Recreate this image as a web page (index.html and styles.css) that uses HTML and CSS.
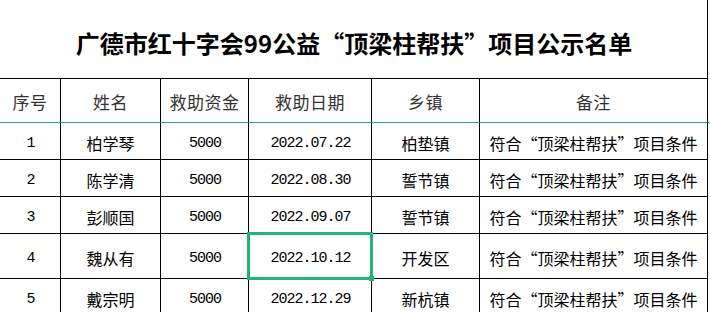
FILE: index.html
```html
<!DOCTYPE html>
<html lang="zh-CN">
<head>
<meta charset="utf-8">
<title>广德市红十字会99公益“顶梁柱帮扶”项目公示名单</title>
<link rel="stylesheet" href="styles.css">
</head>
<body>
<div class="sheet">
  <div class="title">广德市红十字会99公益“顶梁柱帮扶”项目公示名单</div>
  <div class="pad pad-title"></div>

  <div class="hd">序号</div>
  <div class="hd">姓名</div>
  <div class="hd">救助资金</div>
  <div class="hd">救助日期</div>
  <div class="hd">乡镇</div>
  <div class="hd">备注</div>
  <div class="pad pad-hd"></div>

  <div class="cell"><span class="num">1</span></div>
  <div class="cell">柏学琴</div>
  <div class="cell"><span class="num">5000</span></div>
  <div class="cell"><span class="num">2022.07.22</span></div>
  <div class="cell">柏垫镇</div>
  <div class="cell">符合“顶梁柱帮扶”项目条件</div>
  <div class="pad"></div>

  <div class="cell"><span class="num">2</span></div>
  <div class="cell">陈学清</div>
  <div class="cell"><span class="num">5000</span></div>
  <div class="cell"><span class="num">2022.08.30</span></div>
  <div class="cell">誓节镇</div>
  <div class="cell">符合“顶梁柱帮扶”项目条件</div>
  <div class="pad"></div>

  <div class="cell"><span class="num">3</span></div>
  <div class="cell">彭顺国</div>
  <div class="cell"><span class="num">5000</span></div>
  <div class="cell"><span class="num">2022.09.07</span></div>
  <div class="cell">誓节镇</div>
  <div class="cell">符合“顶梁柱帮扶”项目条件</div>
  <div class="pad"></div>

  <div class="cell"><span class="num">4</span></div>
  <div class="cell">魏从有</div>
  <div class="cell"><span class="num">5000</span></div>
  <div class="cell selected"><span class="num">2022.10.12</span></div>
  <div class="cell">开发区</div>
  <div class="cell">符合“顶梁柱帮扶”项目条件</div>
  <div class="pad"></div>

  <div class="cell"><span class="num">5</span></div>
  <div class="cell">戴宗明</div>
  <div class="cell"><span class="num">5000</span></div>
  <div class="cell"><span class="num">2022.12.29</span></div>
  <div class="cell">新杭镇</div>
  <div class="cell">符合“顶梁柱帮扶”项目条件</div>
  <div class="pad"></div>
</div>
</body>
</html>
```

FILE: styles.css
```css
html, body {
  margin: 0;
  padding: 0;
  background: #ffffff;
  overflow: hidden;
}

body {
  font-family: "Noto Sans CJK SC", "Noto Sans", sans-serif;
  color: #000;
}

.sheet {
  display: grid;
  grid-template-columns: 61px 100px 88px 123px 108px 228px 1fr;
  grid-template-rows: 79px 44px 37px 37px 37px 45px 37px;
  width: 710px;
}

.sheet > div {
  box-sizing: border-box;
  display: flex;
  align-items: center;
  justify-content: center;
  white-space: nowrap;
}

.title {
  grid-column: 1 / 7;
  border-right: 1px solid #000;
  border-bottom: 1px solid #000;
  font-size: 24px;
  font-weight: 700;
  padding-top: 6px;
  padding-left: 1px;
}

.pad {
  border-bottom: 1px solid #d4d4d4;
}

.pad-title {
  border-bottom-color: #c8c8c8;
}

.hd {
  border-right: 1px solid #000;
  border-bottom: 1px solid #22b57a;
  font-size: 17px;
  color: #333;
  letter-spacing: 0.5px;
  padding-top: 2px;
}

.pad-hd {
  border-bottom: 1px solid #22b57a;
}

.cell {
  border-right: 1px solid #000;
  border-bottom: 1px solid #000;
  font-size: 16px;
  padding-top: 4px;
}

.num {
  font-family: "Liberation Mono", "DejaVu Sans Mono", monospace;
  font-size: 15px;
  letter-spacing: -1px;
  margin-right: -1px;
}

.selected {
  position: relative;
}

.selected::after {
  content: "";
  position: absolute;
  left: -2px;
  top: -2px;
  right: -2px;
  bottom: -2px;
  border: 3px solid #22b57a;
  pointer-events: none;
}

.selected::before {
  content: "";
  position: absolute;
  right: -3px;
  bottom: -3px;
  width: 5px;
  height: 5px;
  background: #22b57a;
  z-index: 2;
}
```
